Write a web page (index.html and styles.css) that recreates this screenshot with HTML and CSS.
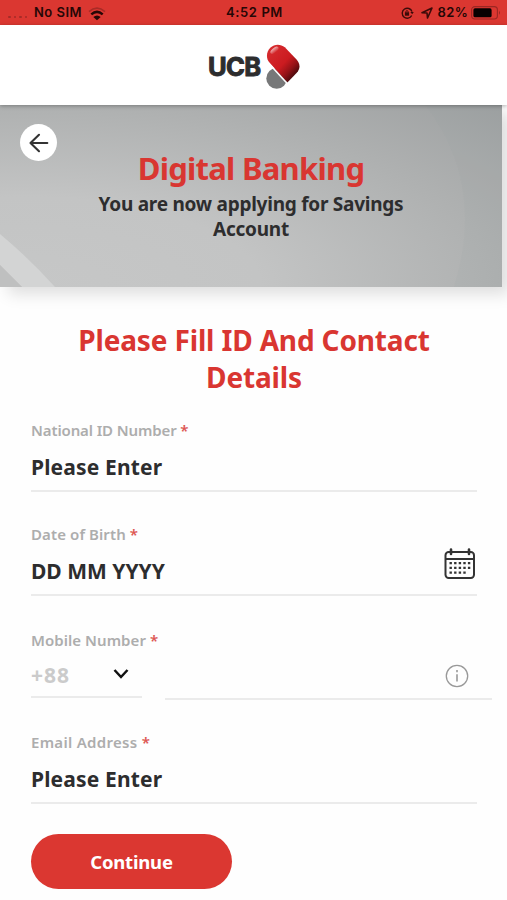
FILE: index.html
```html
<!DOCTYPE html>
<html lang="en">
<head>
<meta charset="utf-8">
<meta name="viewport" content="width=device-width, initial-scale=1">
<title>Digital Banking</title>
<link rel="stylesheet" href="styles.css">
</head>
<body>
<div class="status">
  <div class="status-left">
    <span class="dots"><i></i><i></i><i></i><i></i></span>
    <span class="carrier">No SIM</span>
    <svg class="wifi" width="18" height="14" viewBox="0 0 18 14" fill="none">
      <path d="M1 4.6Q9 -2.2 17 4.6" stroke="#a92b26" stroke-width="1.7"/>
      <path d="M3.3 7.4Q9 2.4 14.7 7.4" stroke="#260706" stroke-width="2.5"/>
      <path d="M9 13.3L5.3 9.9Q9 6.9 12.7 9.9Z" fill="#260706"/>
    </svg>
  </div>
  <span class="clock">4:52 PM</span>
  <div class="status-right">
    <svg width="13" height="12" viewBox="0 0 13 12" fill="none" stroke="#3c0b09" stroke-width="1.4">
      <path d="M10.7 8.5A5 5 0 1 1 11 4.6"/><path d="M9.3 4.9H12.8L11.2 7.3Z" fill="#3c0b09" stroke="none"/>
      <path d="M3.9 5.3H8.1V8.7H3.9Z" fill="#3c0b09" stroke="none"/><path d="M4.8 5.6V4.5Q6 2.6 7.2 4.5V5.6" stroke-width="1"/>
    </svg>
    <svg class="loc" width="12" height="12" viewBox="0 0 12 12" fill="none"><path d="M1 5.7L11 1L6.5 11L6 6Z" stroke="#3c0b09" stroke-width="1.6" stroke-linejoin="round"/></svg>
    <span class="percent">82%</span>
    <svg class="battery" width="30" height="14" viewBox="0 0 30 14"><rect x=".6" y=".6" width="25.8" height="12.4" rx="3.2" fill="none" stroke="#9b2723" stroke-width="1.1"/><rect x="2.4" y="2.3" width="18.2" height="9" rx="1.6" fill="#080101"/><path d="M28 4.8Q30 6.8 28 8.8Z" fill="#9b2723"/></svg>
  </div>
</div>
<header class="brand">
  <span class="brand-name">UCB</span>
  <svg width="34" height="46" viewBox="0 0 34 46">
    <defs>
      <linearGradient id="red" x1="6" y1="6" x2="31" y2="29" gradientUnits="userSpaceOnUse"><stop offset="0" stop-color="#d5292c"/><stop offset=".52" stop-color="#cb1b20"/><stop offset=".78" stop-color="#941217"/><stop offset="1" stop-color="#4b0a0d"/></linearGradient>
      <linearGradient id="shine" x1="0" y1="0" x2="0" y2="1"><stop offset="0" stop-color="#fff" stop-opacity=".65"/><stop offset="1" stop-color="#fff" stop-opacity="0"/></linearGradient>
    </defs>
    <circle cx="10.7" cy="34.4" r="10.4" fill="#777879"/>
    <path d="M3.4 18.6C-.2 14.4.2 7.7 4.3 3.7C8.6-.2 14.5-.2 18.8 3.3L30.3 15.2C34.3 19.4 34.6 24.5 30.8 28.8L21.4 38.4Z" fill="url(#red)"/>
    <path d="M2.4 18.9L21.2 39.6" stroke="#fff" stroke-width="1.5"/>
    <ellipse cx="8.5" cy="6.3" rx="4.8" ry="2.4" transform="rotate(-38 8.5 6.3)" fill="url(#shine)"/>
  </svg>
</header>
<section class="hero">
  <svg class="hero-art" viewBox="0 0 502 182" preserveAspectRatio="none">
    <path d="M0 129Q30 154 55 182H22L0 160Z" fill="#d3d4d4"/><path d="M0 160L22 182H0Z" fill="#bfc0c0"/>
    <path d="M425 0Q486 78 454 182H502V0Z" fill="#929595" opacity=".07"/>
  </svg>
  <button class="back" aria-label="Back"><svg width="20" height="20" viewBox="0 0 20 20" fill="none" stroke="#333" stroke-width="2.1" stroke-linecap="round" stroke-linejoin="round"><path d="M18.3 10H1.5M10 1.8L1.5 10L10 18.2"/></svg></button>
  <h1>Digital Banking</h1>
  <p>You are now applying for Savings<br>Account</p>
</section>
<main>
  <h2>Please Fill ID And Contact<br>Details</h2>
  <div class="field national"><label>National ID Number <b>*</b></label><div class="value">Please Enter</div></div>
  <div class="field birth"><label>Date of Birth <b>*</b></label>
    <div class="value date"><span>DD MM YYYY</span>
      <svg width="32" height="32" viewBox="0 0 32 32" fill="none" stroke="#333" stroke-width="2"><rect x="1.5" y="4" width="28.5" height="26" rx="3.2"/><path d="M1.5 11H30"/><path d="M7 1.5V6M25 1.5V6" stroke-width="2.6" stroke-linecap="round"/><path d="M5.5 15.2H27M5.5 19.9H27M5.5 24.6H22.5" stroke-width="2.3" stroke-dasharray="2.4 2.2"/></svg>
    </div></div>
  <div class="field mobile"><label>Mobile Number <b>*</b></label>
    <div class="phone">
      <div class="code"><span>+88</span><svg width="16" height="12" viewBox="0 0 16 12" fill="none" stroke="#111" stroke-width="2.5"><path d="M1.5 2L8 9L14.5 2"/></svg></div>
      <div class="number"><svg width="24" height="24" viewBox="0 0 24 24" fill="none" stroke="#999" stroke-width="1.3"><circle cx="12" cy="12" r="10.7"/><path d="M12 10.3V17.5M12 6V8.2" stroke-width="1.6"/></svg></div>
    </div></div>
  <div class="field email"><label>Email Address <b>*</b></label><div class="value">Please Enter</div></div>
  <button class="continue">Continue</button>
</main>
</body>
</html>
```
FILE: styles.css
```css
* { box-sizing: border-box; }
body { margin: 0; width: 507px; height: 900px; overflow: hidden; background: #fefefe; color: #2d2d2e; font-family: "Noto Sans", "Open Sans", sans-serif; font-weight: 700; }
svg { display: block; flex: none; }
button { border: 0; padding: 0; font: inherit; }

.status { height: 25px; background: #db3731; display: grid; grid-template-columns: 1fr auto 1fr; align-items: center; font: 600 13px/25px Inter, sans-serif; color: #260706; padding: 0 6px 0 8px; }
.status-left, .status-right { display: flex; align-items: center; }
.status-right { justify-content: flex-end; }
.dots { display: flex; gap: 3px; width: 26px; padding-top: 9px; }
.dots i { width: 2.5px; height: 2.5px; border-radius: 50%; background: #a52b27; }
.carrier { letter-spacing: .5px; }
.wifi { margin: 2px 0 0 6px; }
.clock { letter-spacing: .6px; }
.percent { letter-spacing: .3px; }
.loc { margin: 0 5px 0 7px; }
.battery { margin-left: 3px; }

.brand { height: 80px; background: #fff; display: flex; align-items: center; padding: 4px 0 0 208px; gap: 5px; position: relative; z-index: 1; box-shadow: 0 1px 4px rgba(0,0,0,.3); }
.brand svg { margin-top: -1px; }
.brand-name { font: 700 25.5px/30px Inter, sans-serif; letter-spacing: -.6px; -webkit-text-stroke: 1px #2d2d2e; width: 53px; }

.hero { position: relative; width: 502px; height: 182px; text-align: center; padding-top: 42px; background: radial-gradient(ellipse at 5% 100%, #c6c7c7 0%, #c3c4c4 35%, #afb1b1 70%, #999c9d 108%); box-shadow: 8px 7px 15px rgba(0,0,0,.13); }
.hero-art { position: absolute; inset: 0; width: 100%; height: 100%; }
.back { position: absolute; left: 20px; top: 19px; width: 37px; height: 37px; border-radius: 50%; background: #fff; display: grid; place-items: center; }
.hero h1 { position: relative; margin: 0; font-size: 31px; line-height: 42px; letter-spacing: -.75px; color: #d93631; font-weight: 700; }
.hero p { position: relative; margin: 3px 0 0; font-size: 19px; line-height: 24.5px; letter-spacing: -.25px; }

main { padding: 35px 30px 0 31px; }
h2 { margin: 0; text-align: center; color: #d93631; font-size: 28px; line-height: 36.5px; letter-spacing: -.15px; }
.field { height: 104px; }
.national { margin-top: 25px; }
label { display: block; font-size: 15px; line-height: 20px; font-weight: 600; color: #adadad; }
.national label { letter-spacing: -.12px; }
.birth label { letter-spacing: .1px; }
.mobile label { letter-spacing: .05px; }
.email label { letter-spacing: .3px; }
label b { color: #dd5753; font-weight: 600; letter-spacing: 0; }
.value { height: 52px; border-bottom: 2px solid #ebebeb; font-size: 21px; line-height: 54px; letter-spacing: .15px; }
.date { display: flex; justify-content: space-between; align-items: flex-start; letter-spacing: 0; }
.date svg { margin: 4px 1px 0 0; }
.mobile { padding-top: 2px; }
.phone { display: flex; gap: 23px; margin-right: -15px; }
.code { width: 111px; height: 48px; border-bottom: 2px solid #ebebeb; display: flex; align-items: center; justify-content: space-between; padding: 4px 13px 0 0; font-size: 21px; letter-spacing: 1px; color: #cbcbcb; }
.code svg { margin-top: -2px; }
.number { flex: 1; height: 50px; border-bottom: 2px solid #ebebeb; display: flex; justify-content: flex-end; padding: 14px 23px 0 0; }
.continue { display: block; margin-top: -2px; width: 201px; height: 55px; border-radius: 28px; background: #db3731; color: #fff; font-size: 18.5px; line-height: 54px; letter-spacing: -.2px; }
```
